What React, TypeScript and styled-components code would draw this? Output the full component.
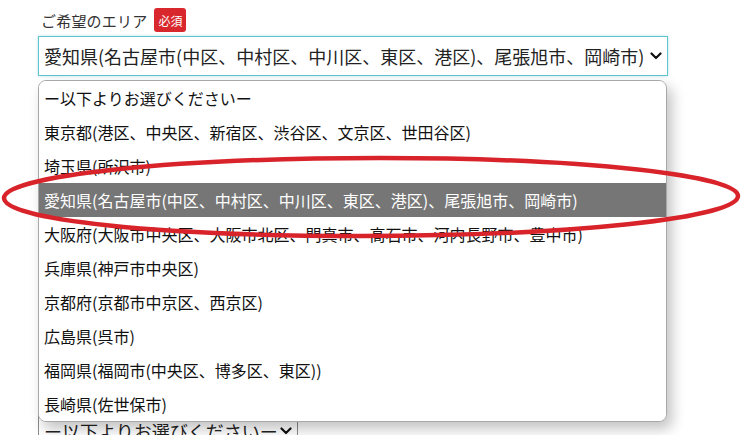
import React from 'react';
import styled, { createGlobalStyle } from 'styled-components';

const GlobalStyle = createGlobalStyle`
  html, body {
    margin: 0;
    padding: 0;
    background: #fff;
  }
  body {
    font-family: "Noto Sans CJK JP", "Noto Sans", sans-serif;
    color: #222;
  }
`;

const areas = [
  'ー以下よりお選びくださいー',
  '東京都(港区、中央区、新宿区、渋谷区、文京区、世田谷区)',
  '埼玉県(所沢市)',
  '愛知県(名古屋市(中区、中村区、中川区、東区、港区)、尾張旭市、岡崎市)',
  '大阪府(大阪市中央区、大阪市北区、門真市、高石市、河内長野市、豊中市)',
  '兵庫県(神戸市中央区)',
  '京都府(京都市中京区、西京区)',
  '広島県(呉市)',
  '福岡県(福岡市(中央区、博多区、東区))',
  '長崎県(佐世保市)',
];

const selectedIndex = 3;

const Page = styled.div`
  position: relative;
  width: 741px;
  height: 435px;
  overflow: hidden;
  padding: 8px 0 0 38px;
  box-sizing: border-box;
`;

const LabelRow = styled.div`
  display: flex;
  align-items: center;
  gap: 7px;
  height: 24px;
  padding-left: 3px;
`;

const Label = styled.span`
  font-size: 15px;
  color: #333;
  letter-spacing: 0.2px;
`;

const Badge = styled.span`
  display: inline-flex;
  align-items: center;
  justify-content: center;
  width: 32px;
  height: 24px;
  border-radius: 3px;
  background: #d9282d;
  color: #fff;
  font-size: 12px;
`;

const Select = styled.div<{ $width: number; $focused?: boolean }>`
  display: flex;
  align-items: center;
  justify-content: space-between;
  width: ${(p) => p.$width}px;
  height: 40px;
  box-sizing: border-box;
  padding: 0 5px 0 5px;
  border: 1px solid ${(p) => (p.$focused ? '#62c2cd' : '#8a8a8a')};
  box-shadow: ${(p) => (p.$focused ? '0 0 3px rgba(98, 194, 205, 0.45)' : 'none')};
  background: #fff;
  font-size: 18px;
  color: #222;
  white-space: nowrap;
`;

const SelectText = styled.span`
  overflow: hidden;
`;

const Chevron = () => (
  <svg width="12" height="8" viewBox="0 0 12 8">
    <path d="M1.5 1.5 L6 6 L10.5 1.5" fill="none" stroke="#111" strokeWidth="2.2" strokeLinecap="round" strokeLinejoin="round" />
  </svg>
);

const TopSelect = styled(Select)`
  margin-top: 4px;
`;

const LowerSelect = styled(Select)`
  margin-top: 335px;
`;

const Popup = styled.ul`
  position: absolute;
  left: 38px;
  top: 80px;
  width: 629px;
  margin: 0;
  padding: 0;
  list-style: none;
  box-sizing: border-box;
  background: #fff;
  border: 1px solid #a8a8a8;
  border-radius: 8px;
  overflow: hidden;
  box-shadow: 5px 7px 14px rgba(0, 0, 0, 0.24);
`;

const Option = styled.li<{ $selected?: boolean }>`
  display: flex;
  align-items: center;
  height: 34px;
  padding-left: 5px;
  font-size: 16px;
  white-space: nowrap;
  background: ${(p) => (p.$selected ? '#767676' : '#fff')};
  color: ${(p) => (p.$selected ? '#fff' : '#111')};
`;

const Annotation = styled.svg`
  position: absolute;
  left: 0;
  top: 0;
  pointer-events: none;
`;

export default function App() {
  return (
    <>
      <GlobalStyle />
      <Page>
        <LabelRow>
          <Label>ご希望のエリア</Label>
          <Badge>必須</Badge>
        </LabelRow>
        <TopSelect $width={630} $focused>
          <SelectText>{areas[selectedIndex]}</SelectText>
          <Chevron />
        </TopSelect>
        <LowerSelect $width={260}>
          <SelectText>{areas[0]}</SelectText>
          <Chevron />
        </LowerSelect>

        <Popup>
          {areas.map((a, i) => (
            <Option key={i} $selected={i === selectedIndex}>
              {a}
            </Option>
          ))}
        </Popup>

        <Annotation width="741" height="435" viewBox="0 0 741 435">
          <path
            d="M 4 198 C 4 176, 170 158, 380 158 C 590 158, 738 176, 738 196 C 738 218, 570 236, 360 236 C 160 236, 4 220, 4 198 Z"
            fill="none"
            stroke="#d9232a"
            strokeWidth="4.5"
          />
        </Annotation>
      </Page>
    </>
  );
}
